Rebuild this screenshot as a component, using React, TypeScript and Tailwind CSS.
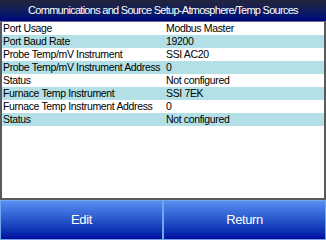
const rows = [
  { label: "Port Usage", value: "Modbus Master" },
  { label: "Port Baud Rate", value: "19200" },
  { label: "Probe Temp/mV Instrument", value: "SSI AC20" },
  { label: "Probe Temp/mV Instrument Address", value: "0" },
  { label: "Status", value: "Not configured" },
  { label: "Furnace Temp Instrument", value: "SSI 7EK" },
  { label: "Furnace Temp Instrument Address", value: "0" },
  { label: "Status", value: "Not configured" },
];

export default function App() {
  return (
    <div className="w-[326px] h-[240px] flex flex-col bg-white overflow-hidden font-['Liberation_Sans',sans-serif] text-[10.5px] tracking-[-0.35px]">
      <div className="h-[22px] shrink-0 flex items-center justify-center bg-gradient-to-b from-[#24243c] to-[#00007c] text-white text-[11px] tracking-[-0.72px] border-b border-[#6a6a80]">
        Communications and Source Setup-Atmosphere/Temp Sources
      </div>
      <div className="flex-1 border-x-2 border-[#5a5a5a] border-b-2">
        {rows.map((row, i) => (
          <div
            key={i}
            className={`h-[13px] flex items-center leading-none text-black ${i % 2 === 1 ? "bg-[#b3e0e6]" : "bg-white"}`}
          >
            <span className="w-[164px] pl-[1px] shrink-0 whitespace-nowrap">{row.label}</span>
            <span className="whitespace-nowrap">{row.value}</span>
          </div>
        ))}
      </div>
      <div className="h-[40px] shrink-0 flex">
        <button className="flex-1 flex items-center justify-center text-white text-[13px] tracking-[-0.4px] bg-gradient-to-b from-[#5b8ef2] to-[#0606a0] border border-[#6fa8ec]">
          Edit
        </button>
        <button className="flex-1 flex items-center justify-center text-white text-[13px] tracking-[-0.4px] bg-gradient-to-b from-[#5b8ef2] to-[#0606a0] border border-[#6fa8ec]">
          Return
        </button>
      </div>
    </div>
  );
}
